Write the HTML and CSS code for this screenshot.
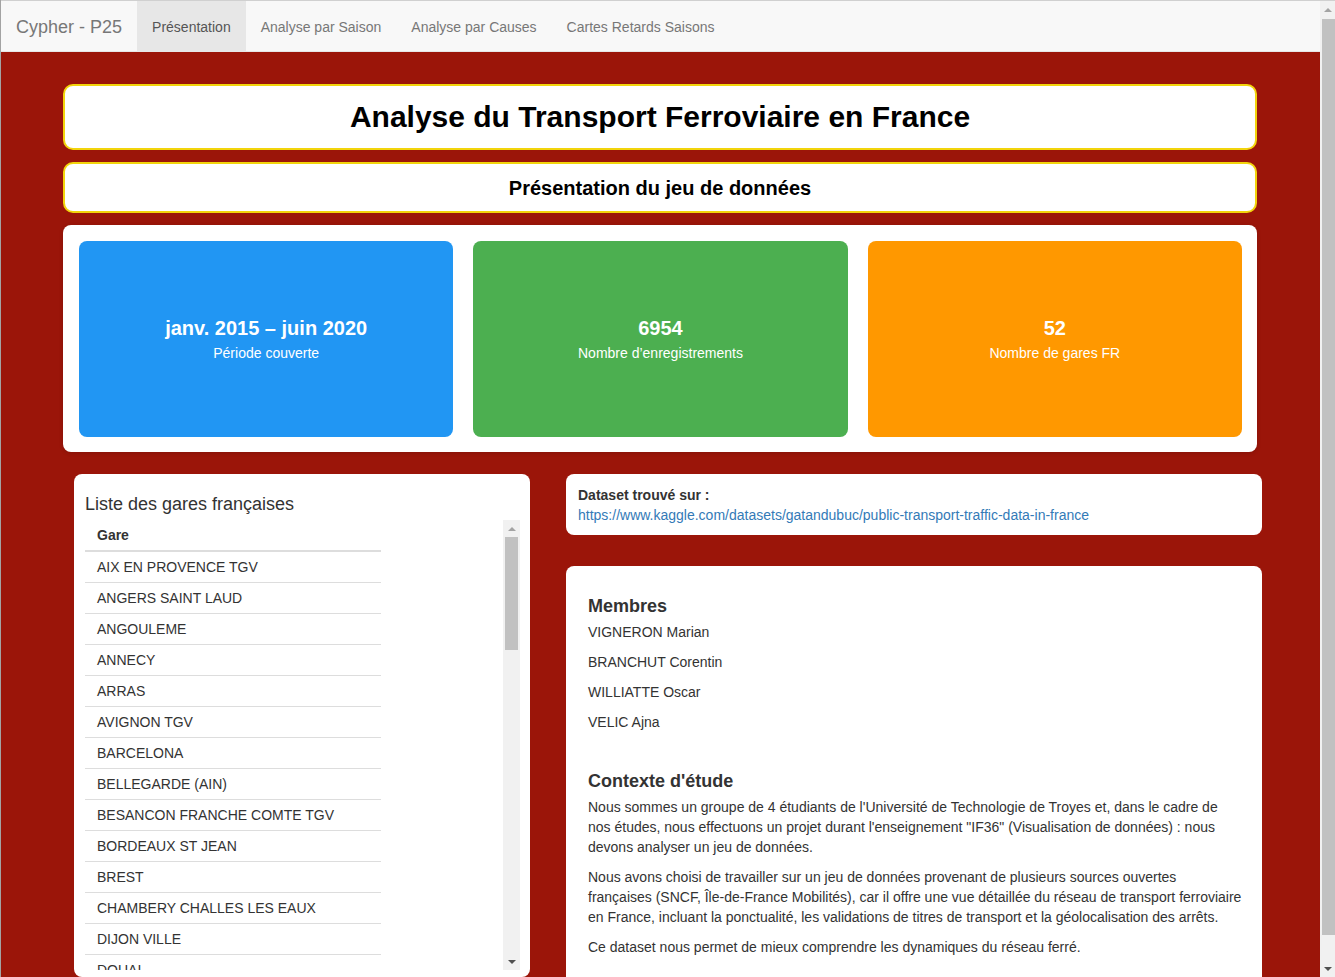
FILE: index.html
```html
<!DOCTYPE html>
<html lang="fr">
<head>
<meta charset="utf-8">
<title>Cypher - P25</title>
<link rel="stylesheet" href="styles.css">
</head>
<body>
<nav class="navbar">
  <a class="brand" href="#">Cypher - P25</a>
  <ul class="nav">
    <li class="active"><a href="#">Présentation</a></li>
    <li><a href="#">Analyse par Saison</a></li>
    <li><a href="#">Analyse par Causes</a></li>
    <li><a href="#">Cartes Retards Saisons</a></li>
  </ul>
</nav>
<main class="main">
  <div class="title-box"><h1>Analyse du Transport Ferroviaire en France</h1></div>
  <div class="subtitle-box"><h2>Présentation du jeu de données</h2></div>
  <div class="cards">
    <div class="card card-blue"><div class="card-value">janv. 2015 – juin 2020</div><div class="card-label">Période couverte</div></div>
    <div class="card card-green"><div class="card-value">6954</div><div class="card-label">Nombre d’enregistrements</div></div>
    <div class="card card-orange"><div class="card-value">52</div><div class="card-label">Nombre de gares FR</div></div>
  </div>
  <div class="lower">
    <section class="panel panel-list">
      <h3 class="panel-title">Liste des gares françaises</h3>
      <div class="scroll">
        <div class="scroll-body">
          <table class="stations">
            <thead><tr><th>Gare</th></tr></thead>
            <tbody>
              <tr><td>AIX EN PROVENCE TGV</td></tr>
              <tr><td>ANGERS SAINT LAUD</td></tr>
              <tr><td>ANGOULEME</td></tr>
              <tr><td>ANNECY</td></tr>
              <tr><td>ARRAS</td></tr>
              <tr><td>AVIGNON TGV</td></tr>
              <tr><td>BARCELONA</td></tr>
              <tr><td>BELLEGARDE (AIN)</td></tr>
              <tr><td>BESANCON FRANCHE COMTE TGV</td></tr>
              <tr><td>BORDEAUX ST JEAN</td></tr>
              <tr><td>BREST</td></tr>
              <tr><td>CHAMBERY CHALLES LES EAUX</td></tr>
              <tr><td>DIJON VILLE</td></tr>
              <tr><td>DOUAI</td></tr>
              <tr><td>DUNKERQUE</td></tr>
              <tr><td>GRENOBLE</td></tr>
              <tr><td>LA ROCHELLE VILLE</td></tr>
              <tr><td>LAVAL</td></tr>
              <tr><td>LE CREUSOT MONTCEAU MONTCHANIN</td></tr>
              <tr><td>LE MANS</td></tr>
              <tr><td>LILLE</td></tr>
              <tr><td>LYON PART DIEU</td></tr>
              <tr><td>MACON LOCHE</td></tr>
              <tr><td>MARNE LA VALLEE</td></tr>
              <tr><td>MARSEILLE ST CHARLES</td></tr>
              <tr><td>METZ</td></tr>
              <tr><td>MONTPELLIER</td></tr>
              <tr><td>MULHOUSE VILLE</td></tr>
              <tr><td>NANCY</td></tr>
              <tr><td>NANTES</td></tr>
              <tr><td>NICE VILLE</td></tr>
              <tr><td>NIMES</td></tr>
              <tr><td>PARIS EST</td></tr>
              <tr><td>PARIS LYON</td></tr>
              <tr><td>PARIS MONTPARNASSE</td></tr>
              <tr><td>PARIS NORD</td></tr>
              <tr><td>PARIS VAUGIRARD</td></tr>
              <tr><td>PERPIGNAN</td></tr>
              <tr><td>POITIERS</td></tr>
              <tr><td>QUIMPER</td></tr>
              <tr><td>REIMS</td></tr>
              <tr><td>RENNES</td></tr>
              <tr><td>SAINT ETIENNE CHATEAUCREUX</td></tr>
              <tr><td>ST MALO</td></tr>
              <tr><td>ST PIERRE DES CORPS</td></tr>
              <tr><td>STRASBOURG</td></tr>
              <tr><td>TOULON</td></tr>
              <tr><td>TOULOUSE MATABIAU</td></tr>
              <tr><td>TOURCOING</td></tr>
              <tr><td>TOURS</td></tr>
              <tr><td>VALENCE ALIXAN TGV</td></tr>
              <tr><td>VANNES</td></tr>
            </tbody>
          </table>
        </div>
        <div class="fake-scrollbar list-scrollbar" aria-hidden="true">
          <span class="arrow-up"></span>
          <span class="track"><span class="thumb list-thumb"></span></span>
          <span class="arrow-down"></span>
        </div>
      </div>
    </section>
    <div class="right-col">
      <section class="panel panel-source">
        <div class="source-label">Dataset trouvé sur :</div>
        <a class="source-link" href="#">https://www.kaggle.com/datasets/gatandubuc/public-transport-traffic-data-in-france</a>
      </section>
      <section class="panel panel-info">
        <h4>Membres</h4>
        <p>VIGNERON Marian</p>
        <p>BRANCHUT Corentin</p>
        <p>WILLIATTE Oscar</p>
        <p>VELIC Ajna</p>
        <h4 class="spaced">Contexte d'étude</h4>
        <p>Nous sommes un groupe de 4 étudiants de l'Université de Technologie de Troyes et, dans le cadre de nos études, nous effectuons un projet durant l'enseignement "IF36" (Visualisation de données) : nous devons analyser un jeu de données.</p>
        <p>Nous avons choisi de travailler sur un jeu de données provenant de plusieurs sources ouvertes françaises (SNCF, Île-de-France Mobilités), car il offre une vue détaillée du réseau de transport ferroviaire en France, incluant la ponctualité, les validations de titres de transport et la géolocalisation des arrêts.</p>
        <p>Ce dataset nous permet de mieux comprendre les dynamiques du réseau ferré.</p>
        <h4 class="spaced">Objectifs</h4>
        <p>Identifier les gares et les périodes les plus touchées par les retards, et comprendre leurs causes.</p>
      </section>
    </div>
  </div>
</main>
<div class="fake-scrollbar page-scrollbar" aria-hidden="true">
  <span class="arrow-up"></span>
  <span class="track"><span class="thumb page-thumb"></span></span>
  <span class="arrow-down"></span>
</div>
</body>
</html>
```

FILE: styles.css
```css
* { box-sizing: border-box; }

html { background: #9b1509; }

body {
  margin: 0 15px 0 0;
  border-left: 1px solid #a3a3a3;
  font-family: "Liberation Sans", Arial, sans-serif;
  font-size: 14px;
  line-height: 20px;
  color: #333;
  background: #9b1509;
}

.navbar {
  display: flex;
  align-items: stretch;
  height: 52px;
  background: #f8f8f8;
  border-top: 1px solid #d0d0d0;
  border-bottom: 1px solid #e7e7e7;
}

.brand {
  padding: 16px 15px 14px;
  font-size: 18px;
  line-height: 20px;
  color: #777;
  text-decoration: none;
}

.nav {
  display: flex;
  margin: 0;
  padding: 0;
  list-style: none;
}

.nav a {
  display: block;
  height: 50px;
  padding: 16px 15px 14px;
  color: #777;
  text-decoration: none;
}

.nav .active a {
  background: #e7e7e7;
  color: #555;
}

.main {
  padding: 32px 63px 40px 62px;
}

.title-box,
.subtitle-box {
  background: #fff;
  border: 2px solid #f2d40c;
  border-radius: 10px;
  text-align: center;
  color: #000;
}

.title-box h1 {
  margin: 0;
  padding: 14px 0 14px;
  font-size: 30px;
  line-height: 34px;
  font-weight: bold;
}

.subtitle-box {
  margin-top: 12px;
}

.subtitle-box h2 {
  margin: 0;
  padding: 13px 0 12px;
  font-size: 20px;
  line-height: 22px;
  font-weight: bold;
}

.cards {
  margin-top: 12px;
  display: grid;
  grid-template-columns: 1fr 1fr 1fr;
  gap: 20px;
  padding: 16px 15px 15px 16px;
  background: #fff;
  border-radius: 8px;
  box-shadow: 0 1px 4px rgba(0, 0, 0, 0.15);
}

.card {
  height: 196px;
  border-radius: 8px;
  display: flex;
  flex-direction: column;
  align-items: center;
  justify-content: center;
  color: #fff;
}

.card-blue { background: #2196f3; }
.card-green { background: #4caf50; }
.card-orange { background: #ff9800; }

.card-value {
  font-size: 20px;
  line-height: 24px;
  font-weight: bold;
}

.card-label {
  margin-top: 3px;
  font-size: 14px;
  line-height: 20px;
}

.lower {
  margin: 22px -5px 0 11px;
  display: grid;
  grid-template-columns: 456px 696px;
  gap: 36px;
  align-items: start;
}

.panel {
  background: #fff;
  border-radius: 8px;
}

.panel-list {
  padding: 10px 10px 7px 11px;
}

.panel-title {
  margin: 10px 0 6px 0;
  font-size: 18px;
  line-height: 20px;
  font-weight: normal;
}

.scroll {
  display: flex;
  height: 450px;
  width: 435px;
}

.scroll-body {
  flex: 1;
  overflow: hidden;
}

.stations {
  width: 296px;
  border-collapse: collapse;
}

.stations th {
  text-align: left;
  font-weight: bold;
  padding: 5px 12px 5px;
  border-bottom: 2px solid #ddd;
}

.stations td {
  padding: 5px 12px;
  border-bottom: 1px solid #ddd;
}

/* decorative scrollbars (headless capture hides native ones) */
.fake-scrollbar {
  display: flex;
  flex-direction: column;
  align-items: stretch;
  background: #f1f1f1;
}

.list-scrollbar {
  width: 17px;
  flex: none;
}

.page-scrollbar {
  position: fixed;
  top: 0;
  right: 0;
  bottom: 0;
  width: 15px;
  border-top: 1px solid #d0d0d0;
}

.arrow-up,
.arrow-down {
  flex: none;
  height: 17px;
  display: flex;
  align-items: center;
  justify-content: center;
}

.arrow-up::before {
  content: "";
  border-left: 4px solid transparent;
  border-right: 4px solid transparent;
  border-bottom: 4px solid #a3a3a3;
}

.arrow-down::before {
  content: "";
  border-left: 4px solid transparent;
  border-right: 4px solid transparent;
  border-top: 4px solid #505050;
}

.track {
  flex: 1;
  display: block;
  position: relative;
}

.thumb {
  display: block;
  background: #c1c1c1;
}

.list-thumb {
  margin: 0 2px;
  height: 113px;
}

.page-thumb {
  margin: 1px 0 0 2px;
  height: 916px;
}

.right-col {
  display: flex;
  flex-direction: column;
  gap: 31px;
}

.panel-source {
  padding: 11px 12px 10px;
}

.source-label {
  font-weight: bold;
}

.source-link {
  color: #337ab7;
  text-decoration: none;
}

.panel-info {
  padding: 20px 19px 20px 22px;
}

.panel-info h4 {
  margin: 10px 0 6px;
  font-size: 18px;
  line-height: 20px;
  font-weight: bold;
}

.panel-info h4.spaced {
  margin-top: 39px;
}

.panel-info p {
  margin: 0 0 10px;
}
```
